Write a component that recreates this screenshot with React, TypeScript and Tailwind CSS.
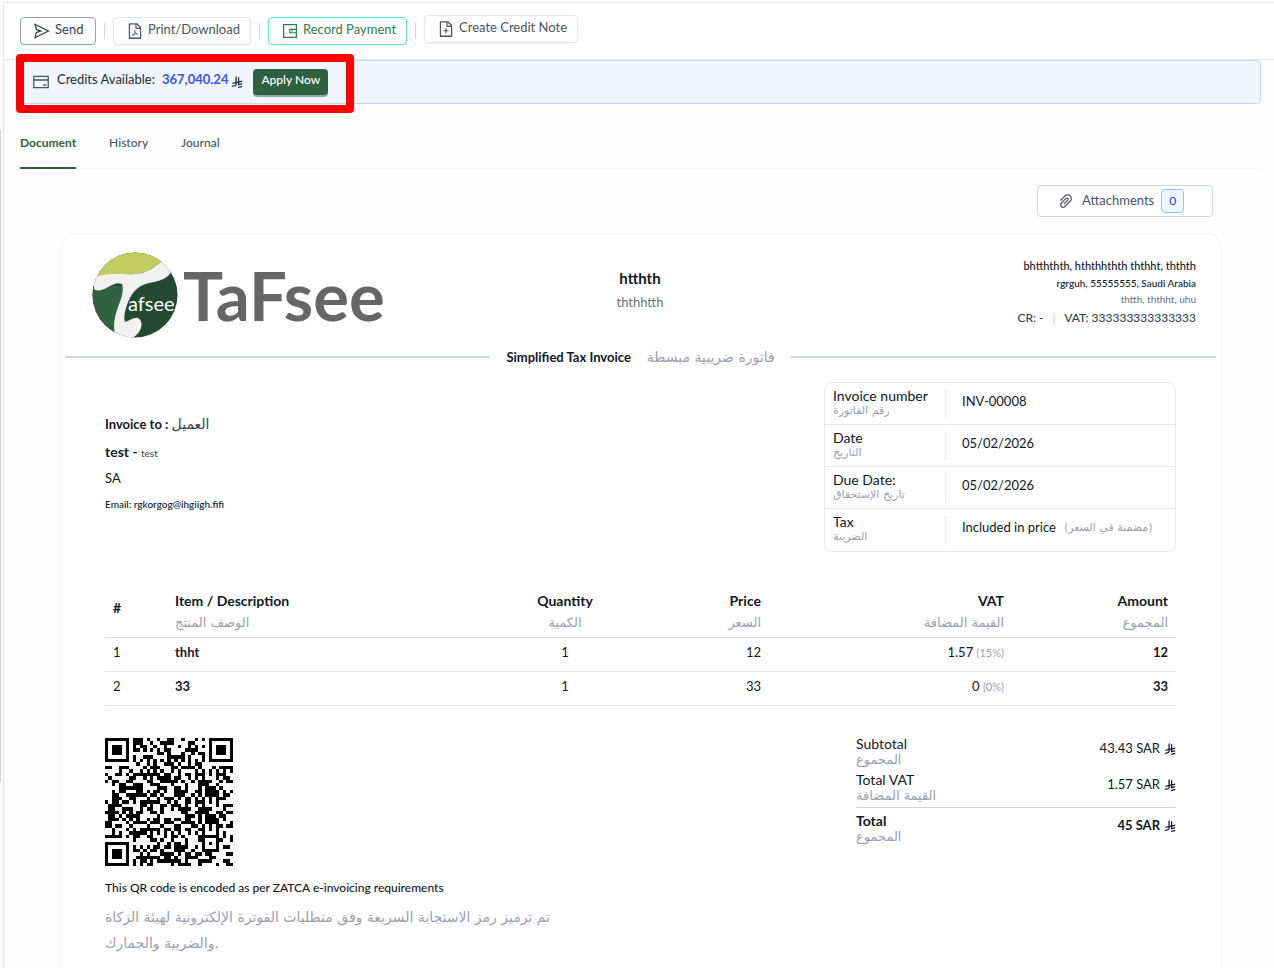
import React, { useMemo } from "react";
import {
  AiOutlineCreditCard,
  AiOutlineFileAdd,
  AiOutlineFilePdf,
  AiOutlinePaperClip,
  AiOutlineSend,
  AiOutlineWallet,
} from "react-icons/ai";

/* ---------- QR code (version 5, level L, byte mode) ---------- */

const QR_SIZE = 37;
const QR_DATA = 108;
const QR_ECC = 26;
const QR_FORMAT = 0b110011000101111;

function gfMul(a: number, b: number): number {
  let r = 0;
  for (let i = 7; i >= 0; i--) {
    r = (r << 1) ^ ((r >>> 7) * 0x11d);
    r ^= ((b >>> i) & 1) * a;
  }
  return r;
}

function eccFor(data: number[]): number[] {
  const gen: number[] = new Array(QR_ECC).fill(0);
  gen[QR_ECC - 1] = 1;
  let root = 1;
  for (let i = 0; i < QR_ECC; i++) {
    for (let j = 0; j < QR_ECC; j++) {
      gen[j] = gfMul(gen[j], root);
      if (j + 1 < QR_ECC) gen[j] ^= gen[j + 1];
    }
    root = gfMul(root, 2);
  }
  const rem: number[] = new Array(QR_ECC).fill(0);
  for (const b of data) {
    const f = b ^ (rem.shift() as number);
    rem.push(0);
    gen.forEach((g, i) => (rem[i] ^= gfMul(g, f)));
  }
  return rem;
}

function encodeQr(text: string): boolean[][] {
  const bits: number[] = [];
  const push = (v: number, n: number) => {
    for (let i = n - 1; i >= 0; i--) bits.push((v >>> i) & 1);
  };
  push(4, 4);
  push(text.length, 8);
  for (const c of text) push(c.charCodeAt(0), 8);
  push(0, 4);
  const data: number[] = [];
  for (let i = 0; i < bits.length; i += 8) data.push(parseInt(bits.slice(i, i + 8).join(""), 2));
  for (let pad = 0xec; data.length < QR_DATA; pad ^= 0xec ^ 0x11) data.push(pad);
  const all = data.concat(eccFor(data));

  const m: boolean[][] = Array.from({ length: QR_SIZE }, () => new Array(QR_SIZE).fill(false));
  const fixed: boolean[][] = Array.from({ length: QR_SIZE }, () => new Array(QR_SIZE).fill(false));
  const set = (x: number, y: number, v: boolean) => {
    if (x < 0 || y < 0 || x >= QR_SIZE || y >= QR_SIZE) return;
    m[y][x] = v;
    fixed[y][x] = true;
  };
  for (let i = 0; i < QR_SIZE; i++) {
    set(6, i, i % 2 === 0);
    set(i, 6, i % 2 === 0);
  }
  for (const [cx, cy] of [[3, 3], [QR_SIZE - 4, 3], [3, QR_SIZE - 4]]) {
    for (let dy = -4; dy <= 4; dy++)
      for (let dx = -4; dx <= 4; dx++) {
        const d = Math.max(Math.abs(dx), Math.abs(dy));
        set(cx + dx, cy + dy, d !== 2 && d !== 4);
      }
  }
  for (let dy = -2; dy <= 2; dy++)
    for (let dx = -2; dx <= 2; dx++) set(30 + dx, 30 + dy, Math.max(Math.abs(dx), Math.abs(dy)) !== 1);

  const f = (i: number) => ((QR_FORMAT >>> i) & 1) === 1;
  for (let i = 0; i <= 5; i++) set(8, i, f(i));
  set(8, 7, f(6));
  set(8, 8, f(7));
  set(7, 8, f(8));
  for (let i = 9; i < 15; i++) set(14 - i, 8, f(i));
  for (let i = 0; i < 8; i++) set(QR_SIZE - 1 - i, 8, f(i));
  for (let i = 8; i < 15; i++) set(8, QR_SIZE - 15 + i, f(i));
  set(8, QR_SIZE - 8, true);

  let k = 0;
  for (let right = QR_SIZE - 1; right >= 1; right -= 2) {
    if (right === 6) right = 5;
    for (let v = 0; v < QR_SIZE; v++)
      for (let j = 0; j < 2; j++) {
        const x = right - j;
        const up = ((right + 1) & 2) === 0;
        const y = up ? QR_SIZE - 1 - v : v;
        if (fixed[y][x]) continue;
        const bit = k < all.length * 8 ? (all[k >>> 3] >>> (7 - (k & 7))) & 1 : 0;
        k++;
        const flip = (Math.floor(y / 2) + Math.floor(x / 3)) % 2 === 0;
        m[y][x] = (bit === 1) !== flip;
      }
  }
  return m;
}

function taxPayload(fields: string[]): string {
  return btoa(fields.map((v, i) => String.fromCharCode(i + 1, v.length) + v).join(""));
}

function QrCode() {
  const path = useMemo(() => {
    const m = encodeQr(taxPayload(["htthth", "333333333333333", "2026-02-05T00:00:00.000Z", "45.00", "1.57"]));
    let d = "";
    m.forEach((row, y) =>
      row.forEach((on, x) => {
        if (on) d += `M${x} ${y}h1v1h-1z`;
      })
    );
    return d;
  }, []);
  return (
    <svg viewBox="0 0 37 37" className="size-32" shapeRendering="crispEdges" role="img" aria-label="Invoice QR code">
      <path d={path} fill="#000" />
    </svg>
  );
}

/* ---------- Drawings ---------- */

function Riyal({ className = "size-3" }: { className?: string }) {
  return (
    <svg viewBox="0 0 1124 1257" className={className} fill="currentColor" aria-hidden="true">
      <path d="M699.62,1113.02c-20.06,44.48-33.32,92.75-38.4,143.37l424.51-90.24c20.06-44.47,33.31-92.75,38.4-143.37l-424.51,90.24Z" />
      <path d="M1085.73,895.8c20.06-44.47,33.32-92.75,38.4-143.37l-330.68,70.33v-135.2l292.27-62.11c20.06-44.47,33.32-92.75,38.4-143.37l-330.68,70.27V66.13c-50.67,28.45-95.67,66.32-132.25,110.99v403.35l-132.25,28.11V0c-50.67,28.44-95.67,66.32-132.25,110.99v525.69l-295.91,62.88c-20.06,44.47-33.33,92.75-38.42,143.37l334.33-71.05v170.26l-358.3,76.14c-20.06,44.47-33.32,92.75-38.4,143.37l375.04-79.7c30.53-6.35,56.77-24.4,73.83-49.24l68.78-101.97v-.02c7.14-10.55,11.3-23.27,11.3-36.97v-149.98l132.25-28.11v270.4l424.53-90.28Z" />
    </svg>
  );
}

function Logo() {
  return (
    <svg viewBox="0 0 294 86" className="h-[86px] w-[294px]" role="img" aria-label="Tafsee">
      <defs>
        <clipPath id="logo-disc">
          <circle cx="43" cy="43" r="42.5" />
        </clipPath>
      </defs>
      <g clipPath="url(#logo-disc)">
        <rect width="86" height="86" fill="#224a30" />
        <path d="M0 34H40L24 86H0Z" fill="#306340" />
        <path d="M0 0H76L68 11C60 16 55 21 44 22C30 23 14 22 4 26L0 28Z" fill="#c1cd5e" />
        <path
          d="M4 25C16 20 32 23 43 22C56 21 62 15 69 10C74 10 78 15 79 20C76 26 70 28 62 30C48 32 42 38 38 46C34 54 31 64 33 70C37 69 42 65 46 66C53 70 49 82 40 86H25C20 78 22 66 26 55C30 45 32 38 30 32C21 28 13 41 3 38C1 36 2 30 4 25Z"
          fill="#f1f1f1"
        />
      </g>
      <text x="36" y="59" fontSize="20" fill="#fff" fontFamily="Lato, sans-serif">
        afsee
      </text>
      <text x="91" y="69" fontSize="67" fontWeight="700" fill="#666" fontFamily="Lato, sans-serif">
        TaFsee
      </text>
    </svg>
  );
}

/* ---------- Toolbar ---------- */

function ToolButton({ icon, label, tone }: { icon: React.ReactNode; label: string; tone: string }) {
  return (
    <button
      type="button"
      className={`flex h-7 min-w-[76px] items-center gap-1 rounded border bg-white pl-3 pr-2.5 text-[13px] shadow-xs ${tone}`}
    >
      {icon}
      <span className="pb-1 leading-4">{label}</span>
    </button>
  );
}

function Divider() {
  return <span className="mx-2 h-4 w-px bg-gray-300" />;
}

function Toolbar() {
  return (
    <div className="flex h-[58px] items-center border-y border-gray-200 bg-white pl-4">
      <ToolButton icon={<AiOutlineSend size={18} />} label="Send" tone="border-gray-400 text-gray-700" />
      <Divider />
      <ToolButton icon={<AiOutlineFilePdf size={18} />} label="Print/Download" tone="border-gray-200 text-gray-600" />
      <Divider />
      <ToolButton
        icon={<AiOutlineWallet size={18} />}
        label="Record Payment"
        tone="border-emerald-300 text-[#2f7d4b]"
      />
      <Divider />
      <div className="pb-1">
        <ToolButton icon={<AiOutlineFileAdd size={18} />} label="Create Credit Note" tone="border-gray-200 text-gray-600" />
      </div>
    </div>
  );
}

function CreditsBanner() {
  return (
    <div className="relative ml-4 mr-[13px] flex h-11 items-center rounded border border-blue-200 bg-[#eff6ff] pl-[11px] text-[13px] text-gray-800">
      <AiOutlineCreditCard size={18} className="mr-[7px] text-gray-600" />
      <span className="pb-1">Credits Available:</span>
      <span className="ml-[7px] pb-1 font-bold text-[#3b55e6]">367,040.24</span>
      <Riyal className="ml-[3px] size-3" />
      <button
        type="button"
        className="ml-2.5 h-[26px] rounded bg-[#2f613f] px-2 pb-1 text-xs font-medium text-white shadow-[0_2px_0_0_#9ca3af]"
      >
        Apply Now
      </button>
      <div className="pointer-events-none absolute -left-[5px] -top-[7px] h-[59px] w-[338px] rounded border-8 border-[#ff0000]" />
    </div>
  );
}

function Tabs() {
  return (
    <nav className="ml-4 mr-[13px] mt-[13px] flex gap-[33px] border-b border-gray-100 text-xs font-medium text-gray-600">
      <a href="#document" className="-mb-px h-[52px] border-b-2 border-[#2f613f] pt-4 font-bold leading-5 text-[#2f613f]">
        Document
      </a>
      <a href="#history" className="pt-4 leading-5">
        History
      </a>
      <a href="#journal" className="pt-4 leading-5">
        Journal
      </a>
    </nav>
  );
}

/* ---------- Invoice ---------- */

const AR = "font-['DejaVu_Sans',sans-serif] text-gray-400";

const details = [
  { en: "Invoice number", ar: "رقم الفاتورة", value: "INV-00008" },
  { en: "Date", ar: "التاريخ", value: "05/02/2026" },
  { en: "Due Date:", ar: "تاريخ الإستحقاق", value: "05/02/2026" },
  { en: "Tax", ar: "الضريبة", value: "Included in price", note: "(مضمنة في السعر)" },
];

const items = [
  { n: 1, name: "thht", qty: 1, price: 12, vat: "1.57", rate: "(15%)", amount: 12 },
  { n: 2, name: "33", qty: 1, price: 33, vat: "0", rate: "(0%)", amount: 33 },
];

function Heading({ en, ar, className }: { en: string; ar: string; className: string }) {
  return (
    <th className={`px-2 pb-[3px] font-bold ${className}`}>
      <span className="block leading-[22px]">{en}</span>
      <span className={`block text-[13px] font-normal leading-[22px] ${AR}`}>{ar}</span>
    </th>
  );
}

function TotalRow({ en, ar, value, className = "" }: { en: string; ar: string; value: string; className?: string }) {
  return (
    <div className={`flex justify-between ${className}`}>
      <div>
        <div className="text-sm leading-[18px]">{en}</div>
        <div className={`text-[13px] font-normal leading-[14px] ${AR}`}>{ar}</div>
      </div>
      <div className="flex items-start gap-1 pt-1 text-[13px] leading-[18px]">
        {value}
        <Riyal className="mt-1 size-3" />
      </div>
    </div>
  );
}

function Invoice() {
  return (
    <article className="ml-14 mr-[52px] mt-4 flex-1 rounded-t-2xl border border-b-0 border-gray-100 bg-white pb-3 shadow-xs">
      <header className="grid grid-cols-3 pl-[23px] pr-[25px] pt-[18px]">
        <div className="pl-2">
          <Logo />
        </div>
        <div className="pt-[14px] text-center">
          <h1 className="text-[15px] font-bold leading-6">htthth</h1>
          <p className="text-[13px] leading-6 text-gray-500">ththhtth</p>
        </div>
        <div className="pt-1 text-right">
          <p className="text-[11px] font-medium leading-5">bhtththth, hththhthth ththht, ththth</p>
          <p className="text-[10px] font-medium leading-[14px]">rgrguh, 55555555, Saudi Arabia</p>
          <p className="text-[10px] leading-[18px] text-gray-500">thtth, ththht, uhu</p>
          <p className="text-xs font-medium leading-5 text-gray-700">
            CR: - <span className="mx-1.5 text-gray-300">|</span> VAT: 333333333333333
          </p>
        </div>
      </header>

      <div className="mt-[9px] flex items-center gap-4 pl-1 pr-[5px]">
        <span className="h-0.5 flex-1 bg-gray-300" />
        <h2 className="text-[13px] font-bold leading-5">Simplified Tax Invoice</h2>
        <span className="font-['DejaVu_Sans',sans-serif] text-sm leading-5 text-gray-400">فاتورة ضريبية مبسطة</span>
        <span className="h-0.5 flex-1 bg-gray-300" />
      </div>

      <div className="pl-11 pr-[45px]">
        <div className="flex items-start justify-between pt-[15px]">
          <section className="pt-8">
            <p className="text-[13px] font-bold leading-5">
              Invoice to :{" "}
              <span className="font-['DejaVu_Sans',sans-serif] text-sm font-normal leading-5 text-gray-700">العميل</span>
            </p>
            <p className="mt-2 text-sm font-bold leading-5">
              test - <span className="text-[10px] font-normal text-gray-700">test</span>
            </p>
            <p className="mt-[5px] text-[13px] leading-5">SA</p>
            <p className="mt-[6px] text-[10px] font-medium leading-5">Email: rgkorgog@ihgiigh.fifi</p>
          </section>
          <dl className="w-[352px] divide-y divide-gray-200 rounded-lg border border-gray-200">
            {details.map((d) => (
              <div key={d.en} className="flex h-[42px] items-center">
                <dt className="w-[120px] pb-1 pl-2">
                  <span className="block text-sm leading-[18px]">{d.en}</span>
                  <span className={`block text-[11px] leading-3 ${AR}`}>{d.ar}</span>
                </dt>
                <dd className="flex h-[29px] items-center gap-2 border-l border-gray-200 pb-1 pl-4 text-[13px]">
                  {d.value}
                  {d.note && <span className={`text-[11px] ${AR}`}>{d.note}</span>}
                </dd>
              </div>
            ))}
          </dl>
        </div>

        <table className="mt-[38px] w-full table-fixed text-[13px]">
          <thead>
            <tr className="border-b border-gray-300 text-sm">
              <th className="w-[62px] px-2 pb-3 text-left font-bold">#</th>
              <Heading en="Item / Description" ar="الوصف المنتج" className="text-left" />
              <Heading en="Quantity" ar="الكمية" className="w-[128px] text-center" />
              <Heading en="Price" ar="السعر" className="w-[140px] text-right" />
              <Heading en="VAT" ar="القيمة المضافة" className="w-[243px] text-right" />
              <Heading en="Amount" ar="المجموع" className="w-[164px] text-right" />
            </tr>
          </thead>
          <tbody>
            {items.map((it) => (
              <tr key={it.n} className="h-[34px] border-b border-gray-200">
                <td className="px-2 pb-1">{it.n}</td>
                <td className="px-2 pb-1 font-bold">{it.name}</td>
                <td className="px-2 pb-1 text-center">{it.qty}</td>
                <td className="px-2 pb-1 text-right">{it.price}</td>
                <td className="px-2 pb-1 text-right">
                  {it.vat} <span className="text-[11px] text-gray-400">{it.rate}</span>
                </td>
                <td className="px-2 pb-1 text-right font-bold">{it.amount}</td>
              </tr>
            ))}
          </tbody>
        </table>

        <div className="flex items-start justify-between pt-7">
          <div className="max-w-md pt-1">
            <QrCode />
            <p className="mt-3 text-xs font-medium leading-5">This QR code is encoded as per ZATCA e-invoicing requirements</p>
            <p className="mt-[6px] font-['DejaVu_Sans',sans-serif] text-sm leading-[26px] text-gray-400">
              تم ترميز رمز الاستجابة السريعة وفق متطلبات الفوترة الإلكترونية لهيئة الزكاة والضريبة والجمارك.
            </p>
          </div>
          <div className="w-80 pt-px">
            <TotalRow en="Subtotal" ar="المجموع" value="43.43 SAR" />
            <TotalRow en="Total VAT" ar="القيمة المضافة" value="1.57 SAR" className="mt-1 border-b border-gray-300 pb-1" />
            <TotalRow en="Total" ar="المجموع" value="45 SAR" className="mt-1 font-bold" />
          </div>
        </div>
      </div>
    </article>
  );
}

export default function App() {
  return (
    <div className="flex min-h-screen bg-[#fdfdfd] pt-0.5 font-[Lato,'DejaVu_Sans',sans-serif] text-gray-900">
      <div className="flex w-1 shrink-0 flex-col border-r border-gray-200 pb-[186px] pt-32">
        <span className="w-px flex-1 bg-gray-300" />
      </div>
      <main className="flex min-w-0 flex-1 flex-col">
        <Toolbar />
        <CreditsBanner />
        <Tabs />
        <div className="mr-[61px] mt-4 flex justify-end">
          <button
            type="button"
            className="flex h-8 w-44 items-center rounded border border-gray-300 bg-white pl-[19px] text-[13px] text-gray-600"
          >
            <AiOutlinePaperClip size={18} className="mr-[7px]" />
            <span>Attachments</span>
            <span className="ml-[7px] flex h-6 w-[23px] items-center justify-center rounded border border-blue-300 bg-blue-50 text-xs text-blue-700">
              0
            </span>
          </button>
        </div>
        <Invoice />
      </main>
    </div>
  );
}
